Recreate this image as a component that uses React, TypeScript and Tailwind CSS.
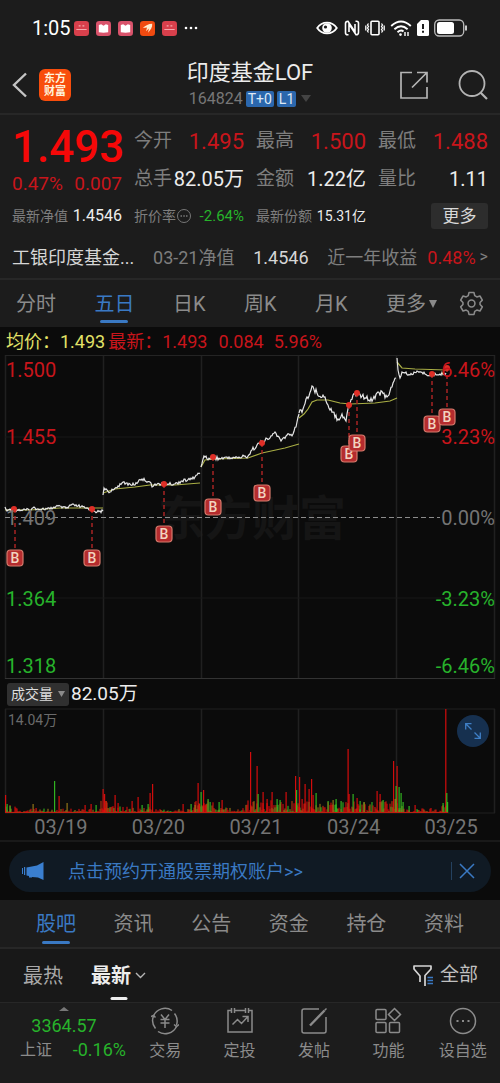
import React from "react";

type Pt = [number, number];

const priceDays: Pt[][] = [
  [[5, 507], [7, 511], [10, 509], [14, 510], [31, 510], [34, 507], [37, 509], [50, 509], [54, 507], [58, 506], [62, 508], [68, 508], [70, 505], [78, 506], [85, 508], [92, 509], [97, 512], [103, 511]],
  [[103, 495], [104, 488], [107, 490], [110, 492], [113, 490], [118, 486], [122, 483], [135, 485], [139, 480], [142, 479], [150, 482], [152, 487], [155, 484], [164, 484], [175, 484], [182, 481], [192, 479], [197, 475], [200, 473]],
  [[201, 467], [204, 456], [210, 459], [213, 457], [220, 459], [226, 457], [235, 458], [248, 456], [252, 450], [257, 445], [262, 442], [270, 438], [275, 432], [281, 441], [287, 435], [293, 434], [297, 422], [299, 414]],
  [[299, 413], [303, 409], [306, 399], [309, 396], [312, 386], [317, 393], [325, 397], [328, 405], [333, 412], [338, 419], [342, 414], [346, 421], [349, 405], [353, 395], [357, 393], [365, 398], [373, 399], [378, 392], [387, 397], [392, 387], [396, 378]],
  [[397, 358], [398, 370], [400, 378], [402, 372], [405, 373], [410, 375], [417, 371], [425, 374], [432, 375], [440, 374], [446, 373]],
];

const averageDays: Pt[][] = [
  [[5, 510], [30, 510], [60, 508], [103, 508]],
  [[103, 493], [115, 489], [135, 487], [150, 485], [175, 485], [200, 483]],
  [[201, 467], [205, 460], [215, 459], [248, 458], [262, 453], [285, 448], [299, 444]],
  [[299, 418], [304, 414], [308, 409], [312, 402], [317, 400], [328, 400], [340, 403], [350, 404], [375, 403], [390, 401], [397, 398]],
  [[397, 362], [402, 368], [415, 369], [446, 370]],
];

const buys: { dot: Pt; tag: Pt }[] = [
  { dot: [14, 509], tag: [15, 558] },
  { dot: [92, 509], tag: [92, 558] },
  { dot: [164, 484], tag: [164, 534] },
  { dot: [213, 457], tag: [213, 507] },
  { dot: [262, 443], tag: [262, 493] },
  { dot: [349, 405], tag: [349, 454] },
  { dot: [357, 393], tag: [357, 443] },
  { dot: [432, 374], tag: [432, 424] },
  { dot: [447, 368], tag: [447, 417] },
];

const noise = (n: number) => {
  const s = Math.sin(n * 12.9898) * 43758.5453;
  return s - Math.floor(s);
};

const jitterPath = (pts: Pt[], amp: number) => {
  let d = `M${pts[0][0]} ${pts[0][1]}`;
  for (let i = 1; i < pts.length; i++) {
    const [x0, y0] = pts[i - 1];
    const [x1, y1] = pts[i];
    const steps = Math.max(1, Math.round(x1 - x0));
    for (let k = 1; k <= steps; k++) {
      const t = k / steps;
      const x = x0 + (x1 - x0) * t;
      const wobble = k === steps ? 0 : (noise(x) - 0.5) * amp;
      d += `L${x.toFixed(1)} ${(y0 + (y1 - y0) * t + wobble).toFixed(1)}`;
    }
  }
  return d;
};

const linePath = (pts: Pt[]) => "M" + pts.map((p) => p.join(" ")).join("L");

const RED = "#e80c0c";
const GREEN = "#35c422";
const OLIVE = "#a08018";

const spikes: [number, number, string][] = [
  [5.5, 795, RED], [7, 804, GREEN], [10, 806, GREEN], [33, 804, OLIVE], [36, 808, RED], [54.5, 781, GREEN], [59, 796, RED], [67, 803, OLIVE],
  [85, 805, RED], [91, 804, RED], [96, 805, GREEN], [103, 789, RED], [104.5, 794, RED], [106, 801, RED], [115, 795, RED], [118, 803, RED],
  [132, 801, RED], [138, 797, RED], [142, 805, GREEN], [150, 793, RED], [152.5, 784, RED], [148, 804, GREEN], [183, 804, RED], [191, 804, GREEN],
  [195, 805, OLIVE], [198, 783, RED], [201, 792, GREEN], [203.5, 790, RED], [208, 799, GREEN], [210, 802, GREEN], [219, 802, GREEN], [222, 800, RED],
  [199.5, 804, RED], [206, 804, RED], [250.5, 752, RED], [257, 766, RED], [258, 794, GREEN], [263, 792, RED], [267, 799, RED], [272, 792, RED],
  [277, 799, GREEN], [280, 800, GREEN], [286, 792, RED], [295.5, 776, RED], [296.5, 790, GREEN], [299.5, 777, RED], [302, 799, RED], [305, 784, RED],
  [309, 789, RED], [311.5, 779, RED], [313, 795, RED], [316, 793, GREEN], [328, 801, GREEN], [333, 800, OLIVE], [336, 799, GREEN], [341, 801, GREEN],
  [348, 749, RED], [349, 794, RED], [353, 794, GREEN], [357, 798, RED], [360, 801, GREEN], [364, 802, OLIVE], [377, 791, RED], [380, 794, RED], [383, 800, GREEN],
  [393.5, 761, RED], [397, 766, RED], [396, 786, GREEN], [399, 787, GREEN], [401, 793, GREEN], [395, 799, OLIVE], [403, 802, GREEN],
  [409, 806, GREEN], [415, 805, RED], [445.7, 709, RED], [446.7, 793, GREEN], [443, 803, GREEN], [447.5, 802, GREEN],
];

const ambient = (x: number) => {
  if (x < 20) return 7;
  if (x < 100) return 3.5;
  if (x < 108) return 12;
  if (x < 156) return 6;
  if (x < 194) return 3;
  if (x < 214) return 12;
  if (x < 245) return 5;
  if (x < 318) return 12;
  if (x < 345) return 10;
  if (x < 392) return 11;
  if (x < 404) return 14;
  if (x < 440) return 4;
  return 7;
};

const ambientBars = Array.from({ length: 441 }, (_, i) => {
  const x = 6 + i;
  const c = noise(x * 3.7);
  return {
    x,
    h: 1 + ambient(x) * Math.pow(noise(x * 1.3), 1.6),
    color: c < 0.5 ? RED : c < 0.75 ? OLIVE : c < 0.87 ? GREEN : "#c83a10",
  };
});

const verticals = [5.5, 103.5, 201.5, 298.5, 396.5, 494.5];

function StatusBar() {
  return (
    <div className="flex h-14 items-center justify-between pl-8 pr-8 text-white">
      <div className="flex items-center gap-[7px]">
        <span className="mr-[-4px] text-[20px]">1:05</span>
        {["bank", "book", "book", "wing", "bank"].map((kind, i) => (
          <svg key={i} viewBox="0 0 16 16" className="size-[15px]" aria-hidden="true">
            <rect width="16" height="16" rx="3.5" fill={kind === "wing" ? "#f04a10" : kind === "book" ? "#d9536b" : "#d8404c"} />
            {kind === "bank" && <path d="M2.500 9h11M5 5.200h2M9 5.200h2" stroke="#f5a9ae" strokeWidth="1.100" />}
            {kind === "book" && <path d="M3 4.200 5.500 3.500 8 5l2.500-1.500 2.500.700V12l-5 .6-5-.6z" fill="#fff" />}
            {kind === "wing" && <path d="M3 7.500C6 4.500 9 3.200 13 3c.4 3.600-1.600 6.600-4.500 9.500L9.600 8 6.400 11 7.500 6.900z" fill="#ffeccf" />}
          </svg>
        ))}
        <svg viewBox="0 0 14 4" className="h-1 w-[14px]" fill="#fff" aria-hidden="true">
          <circle cx="2" cy="2" r="1.300" /><circle cx="7" cy="2" r="1.300" /><circle cx="12" cy="2" r="1.300" />
        </svg>
      </div>
      <div className="flex items-center gap-[5px]">
        <svg viewBox="0 0 22 16" className="h-4 w-[22px]" aria-hidden="true">
          <path d="M1.200 8C6 .800 16 .800 20.800 8 16 15.200 6 15.200 1.200 8z" fill="none" stroke="#fff" strokeWidth="1.800" />
          <circle cx="11" cy="8" r="4.800" fill="#fff" /><circle cx="9.500" cy="7" r="1.600" fill="#1c1c1c" />
        </svg>
        <svg viewBox="0 0 16 16" className="ml-px size-4" fill="none" stroke="#fff" aria-hidden="true">
          <path d="M4.500 14.800H3.500Q1.500 14.800 1.500 12.800V3.500Q1.500 1.200 4 1.200L11 12V4M11.500 1.200h1q2 0 2 2v9.300q0 2.300-2.500 2.300L5 4v8" strokeWidth="1.600" />
        </svg>
        <svg viewBox="0 0 20 16" className="h-4 w-5" fill="none" stroke="#fff" strokeWidth="1.600" aria-hidden="true">
          <rect x="6" y="1.200" width="8" height="13.600" rx="1" />
          <path d="M3.500 3.500 2.500 5l1 1.500L2.500 8l1 1.500-1 1.500 1 1.500M16.500 3.500l1 1.500-1 1.500 1 1.500-1 1.500 1 1.500-1 1.500M.800 5.500v5M19.200 5.500v5" strokeWidth="1.300" />
        </svg>
        <svg viewBox="0 0 22 17" className="h-[17px] w-[22px]" fill="none" stroke="#fff" strokeWidth="1.900" aria-hidden="true">
          <path d="M1.200 6Q11-3 20.800 6M4.400 9.200q6.600-5.800 13.200 0M7.500 12.200q3.500-3 6-.700" />
          <circle cx="10.500" cy="14.600" r="1.300" fill="#fff" stroke="none" />
          <path d="M15 12v4M18 12v4" strokeWidth="1.400" />
        </svg>
        <svg viewBox="0 0 12 16" className="h-4 w-3" aria-hidden="true">
          <path d="M4 0h6.500Q12 0 12 1.500v13q0 1.500-1.500 1.500h-9Q0 16 0 14.500V4z" fill="#fff" />
          <path d="M6 4v5M6 10.800v2" stroke="#1c1c1c" strokeWidth="2" />
        </svg>
        <svg viewBox="0 0 34 18" className="h-[18px] w-[34px]" aria-hidden="true">
          <rect x=".700" y="1" width="29" height="16" rx="4.500" fill="none" stroke="#bbb" strokeWidth="1.300" />
          <rect x="3" y="3" width="17" height="12" rx="2.500" fill="#fff" />
          <path d="M32 6.500v5" stroke="#ddd" strokeWidth="1.800" />
        </svg>
      </div>
    </div>
  );
}

function Header() {
  return (
    <header className="grid h-[59px] grid-cols-[1fr_auto_1fr] items-center border-b-2 border-[#272727] px-3">
      <div className="flex items-center gap-3">
        <button aria-label="返回" className="flex">
          <svg viewBox="0 0 15 26" className="h-[26px] w-[15px]" fill="none" stroke="#c4c4c4" strokeWidth="2.400"><path d="M14 1.500 2 13l12 11.500" /></svg>
        </button>
        <div className="flex size-8 flex-col items-center justify-center rounded-[6px] bg-[#f84d0c] text-[11px] font-bold leading-[13px] text-[#fff3dc]">
          <span>东方</span><span>财富</span>
        </div>
      </div>
      <div className="flex flex-col items-center">
        <h1 className="text-[22px] leading-7 text-[#ececec]">印度基金LOF</h1>
        <div className="flex items-center gap-[3px] leading-6">
          <span className="text-[16px] text-[#777]">164824</span>
          <span className="rounded-[2px] bg-[#2b67ad] px-[2px] text-[14px] leading-4 text-[#dfe9f5]">T+0</span>
          <span className="rounded-[2px] bg-[#2b67ad] px-[2px] text-[14px] leading-4 text-[#dfe9f5]">L1</span>
          <button aria-label="选择市场" className="ml-[2px]">
            <svg viewBox="0 0 10 7" className="h-[7px] w-[10px]" fill="#444"><path d="M0 0h10L5 7z" /></svg>
          </button>
        </div>
      </div>
      <div className="flex items-center justify-end gap-[29px]">
        <button aria-label="分享" className="mr-px">
          <svg viewBox="0 0 28 28" className="size-7" fill="none" stroke="#b4b4b4" strokeWidth="1.700"><path d="M12 1.500H1v25.500h26V16M17 1.500h10v10M27 1.500 12 16.500" /></svg>
        </button>
        <button aria-label="搜索">
          <svg viewBox="0 0 30 30" className="size-[30px]" fill="none" stroke="#b4b4b4" strokeWidth="1.800"><circle cx="14" cy="13.500" r="12.500" /><path d="m22.500 22.500 6.500 6.500" strokeWidth="2.200" /></svg>
        </button>
      </div>
    </header>
  );
}

function Stat({ label, value, red = false }: { label: string; value: string; red?: boolean }) {
  return (
    <div className="flex h-[38px] items-center justify-between whitespace-nowrap">
      <span className="text-[19px] text-[#7e7e7e]">{label}</span>
      <span className={red ? "text-[22px] text-[#c8151b]" : "text-[20px] text-[#ededed]"}>{value}</span>
    </div>
  );
}

function Quote() {
  return (
    <section className="px-3 pt-[7px]">
      <div className="grid grid-cols-4 gap-x-3">
        <div className="flex flex-col">
          <strong className="text-[44px] font-medium leading-[50px] text-[#f60808]">1.493</strong>
          <div className="flex justify-between text-[19px] leading-6 text-[#c8151b]"><span>0.47%</span><span>0.007</span></div>
        </div>
        <div><Stat label="今开" value="1.495" red /><Stat label="总手" value="82.05万" /></div>
        <div><Stat label="最高" value="1.500" red /><Stat label="金额" value="1.22亿" /></div>
        <div><Stat label="最低" value="1.488" red /><Stat label="量比" value="1.11" /></div>
      </div>
      <div className="grid h-9 grid-cols-4 items-center gap-x-3 whitespace-nowrap text-[14px]">
        <div className="flex items-center justify-between"><span className="text-[#7e7e7e]">最新净值</span><span className="text-[16px] text-[#ededed]">1.4546</span></div>
        <div className="flex items-center justify-between">
          <span className="flex items-center text-[#7e7e7e]">折价率
            <svg viewBox="0 0 16 16" className="size-4" fill="none" stroke="#777" aria-hidden="true"><circle cx="8" cy="8" r="6.500" /><path d="M4.500 8h1.500M7.300 8h1.500M10 8h1.500" strokeWidth="1.500" /></svg>
          </span>
          <span className="text-[15px] text-[#27b32b]">-2.64%</span>
        </div>
        <div className="flex items-center justify-between"><span className="text-[#7e7e7e]">最新份额</span><span className="text-[#ededed]">15.31亿</span></div>
        <button className="h-[26px] w-[57px] justify-self-end rounded-[3px] bg-[#2d2d2d] text-[17px] leading-[26px] text-[#d8d8d8]">更多</button>
      </div>
      <a href="#fund" className="mt-[2px] flex h-[42px] items-center justify-between whitespace-nowrap text-[18px] text-[#7e7e7e]">
        <span className="text-[#d6d6d6]">工银印度基金...</span>
        <span>03-21净值</span>
        <span className="text-[#d6d6d6]">1.4546</span>
        <span className="flex items-center gap-[10px]">
          近一年收益
          <span className="flex items-center gap-1"><span className="text-[#c8151b]">0.48%</span><span className="text-[16px]">&gt;</span></span>
        </span>
      </a>
    </section>
  );
}

function PeriodTabs() {
  return (
    <nav className="flex h-[49px] items-stretch gap-[22px] border-t-2 border-[#272727] px-4 text-[20px] text-[#8b8b8b]">
      <div className="flex flex-1 items-stretch justify-between">
        {["分时", "五日", "日K", "周K", "月K"].map((t) => (
          <button key={t} className={t === "五日" ? "relative text-[#3a79c3]" : "relative"}>
            {t}
            {t === "五日" && <span className="absolute bottom-1 left-1/2 h-[3px] w-7 -translate-x-1/2 rounded-full bg-[#3a79c3]" />}
          </button>
        ))}
        <button className="flex items-center gap-[3px]">更多
          <svg viewBox="0 0 8 8" className="size-[8px]" fill="#8b8b8b" aria-hidden="true"><path d="M0 0h8L4 8z" /></svg>
        </button>
      </div>
      <button aria-label="设置">
        <svg viewBox="0 0 24 24" className="size-[25px]" fill="none" stroke="#8b8b8b" strokeWidth="1.500" strokeLinejoin="round">
          <path d="M9.600 1.500h4.800l.7 3 2 1.200 3-.900 2.300 4-2.200 2.200v2l2.200 2.200-2.300 4-3-.900-2 1.200-.7 3H9.600l-.7-3-2-1.200-3 .9-2.300-4L3.800 13v-2L1.600 8.800l2.300-4 3 .9 2-1.200z" /><circle cx="12" cy="12" r="3.300" />
        </svg>
      </button>
    </nav>
  );
}

function PriceChart() {
  return (
    <section className="bg-[#0b0b0b]">
      <div className="flex h-7 items-center whitespace-nowrap pl-[6px] text-[18px] text-[#c8151b]">
        <span className="text-[#e2e268]">均价：1.493</span>
        <span className="ml-[3px]">最新：1.493</span>
        <span className="ml-[11px]">0.084</span>
        <span className="ml-[10px]">5.96%</span>
      </div>
      <div className="relative">
        <svg viewBox="0 355 500 325" className="block h-auto w-full" role="img" aria-label="五日价格走势">
          <text x="252" y="535" textAnchor="middle" fontSize="47" fontWeight="700" fill="#151515">东方财富</text>
          {verticals.map((x) => <path key={x} d={`M${x} 355V679`} stroke="#202020" strokeWidth="1.500" />)}
          <path d="M5 355.500H495" stroke="#242424" />
          <path d="M5 437H495M5 598H495" stroke="#181818" />
          <path d="M5 678.500H495" stroke="#333" />
          <path d="M5 517.500H440" stroke="#8c8c8c" strokeDasharray="5 3" />
          {averageDays.map((d, i) => <path key={i} d={linePath(d)} fill="none" stroke="#a9ae45" strokeWidth="1.200" />)}
          {priceDays.map((d, i) => <path key={i} d={jitterPath(d, i === 3 ? 6 : i === 2 ? 4 : 3)} fill="none" stroke="#e6e6e6" strokeWidth="1.200" />)}
          {buys.map(({ dot, tag }) => (
            <g key={tag[0]}>
              <path d={`M${tag[0]} ${dot[1]}V${tag[1] - 8}`} stroke="#a82525" strokeWidth="1.500" strokeDasharray="4 3" />
              <circle cx={dot[0]} cy={dot[1]} r="3" fill="#df2f27" />
            </g>
          ))}
          {buys.map(({ tag }) => (
            <g key={tag[0]}>
              <rect x={tag[0] - 8} y={tag[1] - 8} width="16" height="16" rx="3.500" fill="#b52c2e" stroke="#d67a6c" strokeWidth="1.200" />
              <text x={tag[0]} y={tag[1] + 5} textAnchor="middle" fontSize="14" fontWeight="500" fill="#f2d3bf">B</text>
            </g>
          ))}
        </svg>
        <div className="absolute inset-0 flex justify-between pb-[2px] pl-[6px] pr-[5px] pt-[3px] text-[20px] leading-6">
          {[["1.500", "1.455", "1.409", "1.364", "1.318"], ["6.46%", "3.23%", "0.00%", "-3.23%", "-6.46%"]].map((col, c) => (
            <div key={c} className={c ? "grid grid-rows-[67fr_81fr_81fr_67fr_24px] text-right" : "grid grid-rows-[67fr_81fr_81fr_67fr_24px]"}>
              {col.map((v, r) => (
                <span key={v} className={r < 2 ? "text-[#c8151b]" : r === 2 ? "text-[#747474]" : "text-[#27b32b]"}>{v}</span>
              ))}
            </div>
          ))}
        </div>
      </div>
    </section>
  );
}

function VolumeChart() {
  return (
    <section className="bg-[#0b0b0b]">
      <div className="flex h-7 items-center gap-[2px] pl-[7px]">
        <div className="relative flex items-center">
          <select aria-label="指标" defaultValue="vol" className="h-[23px] w-[62px] appearance-none rounded-[3px] bg-[#303030] pl-1 text-[14px] leading-[23px] text-[#dedede]">
            <option value="vol">成交量</option>
            <option value="macd">MACD</option>
          </select>
          <svg viewBox="0 0 7 6" className="pointer-events-none absolute right-1 h-[6px] w-[7px]" fill="#8b8b8b" aria-hidden="true"><path d="M0 0h7L3.500 6z" /></svg>
        </div>
        <span className="text-[19px] leading-6 text-[#ededed]">82.05万</span>
      </div>
      <div className="relative">
        <svg viewBox="0 708 500 106" className="block h-auto w-full" role="img" aria-label="成交量">
          {verticals.map((x) => <path key={x} d={`M${x} 709V813`} stroke="#202020" strokeWidth="1.500" />)}
          <path d="M5 709H495M5 813H495" stroke="#202020" />
          {ambientBars.map((b) => <rect key={b.x} x={b.x - 0.5} y={813 - b.h} width="1" height={b.h} fill={b.color} />)}
          {spikes.map(([x, y, c], i) => <rect key={i} x={x - 0.5} y={y} width="1.200" height={813 - y} fill={c} opacity=".9" />)}
          <path d="M5 812.500H448" stroke="#c02010" />
        </svg>
        <span className="absolute left-2 top-[2px] text-[14px] leading-5 text-[#6a6a6a]">14.04万</span>
        <button aria-label="全屏" className="absolute right-[11px] top-[7px] flex size-8 items-center justify-center rounded-full bg-[#16304f]">
          <svg viewBox="0 0 16 16" className="size-4" fill="none" stroke="#3f7fc6" strokeWidth="1.300"><path d="M6.500.700H.700v5.800M1 1l5.500 5.500M9.500 15.300h5.800V9.500M15 15 9.500 9.500" /></svg>
        </button>
      </div>
      <div className="grid h-7 grid-cols-5 border-b-2 border-[#191919] pl-3 text-center text-[20px] leading-[26px] text-[#747474]">
        {["03/19", "03/20", "03/21", "03/24", "03/25"].map((d) => <span key={d}>{d}</span>)}
      </div>
    </section>
  );
}

function Banner() {
  return (
    <div className="bg-[#0b0b0b] px-[9px] py-2">
      <div className="flex h-[42px] items-center rounded-full bg-[#101a24] pl-[13px] pr-4 text-[#3a79c3]">
        <svg viewBox="0 0 22 18" className="h-[18px] w-[22px]" fill="#3a7fd0" aria-hidden="true"><path d="M21.500 0v18l-5.500-2.500L10 15v.5H7V14l-2.500-.5v-8L15 3.500zM0 6h1v6H0zM2 5h1.200v8H2z" /></svg>
        <a href="#options" className="ml-6 text-[18px]">点击预约开通股票期权账户&gt;&gt;</a>
        <span className="ml-auto h-[18px] w-px bg-[#24415f]" />
        <button aria-label="关闭" className="ml-[7px]">
          <svg viewBox="0 0 16 16" className="size-4" fill="none" stroke="#3a79c3" strokeWidth="1.500"><path d="m1 1 14 14M15 1 1 15" /></svg>
        </button>
      </div>
    </div>
  );
}

function Community() {
  return (
    <section>
      <nav className="flex h-[49px] justify-between border-b-2 border-[#272727] px-9 text-[20px] text-[#8b8b8b]">
        {["股吧", "资讯", "公告", "资金", "持仓", "资料"].map((t) => (
          <button key={t} className={t === "股吧" ? "relative text-[#3a79c3]" : "relative"}>
            {t}
            {t === "股吧" && <span className="absolute bottom-[3px] left-1/2 h-[3px] w-7 -translate-x-1/2 rounded-full bg-[#3a79c3]" />}
          </button>
        ))}
      </nav>
      <div className="flex h-[54px] items-center border-b border-[#272727] bg-[#181818] pl-[23px] pr-[22px] text-[20px] text-[#a8a8a8]">
        <button>最热</button>
        <button className="relative ml-7 flex h-full items-center gap-1 font-bold text-[#ededed]">最新
          <svg viewBox="0 0 11 7" className="h-[7px] w-[11px]" fill="none" stroke="#b5b5b5" strokeWidth="1.400" aria-hidden="true"><path d="m1 1 4.500 4.500L10 1" /></svg>
          <span className="absolute bottom-[2px] left-1/2 h-[3px] w-[17px] -translate-x-1/2 rounded-full bg-[#ededed]" />
        </button>
        <button className="ml-auto flex items-center gap-[7px] text-[19px] text-[#c0c0c0]">
          <svg viewBox="0 0 20 22" className="h-[22px] w-5" fill="none" stroke="#d5d5d5" strokeWidth="1.700" strokeLinejoin="round" aria-hidden="true"><path d="M7 17v-6L1 4V1h17v3l-6 6.500V21" /><path d="M14.500 12.500H20M14.500 15.500H20M14.500 18.500H20" stroke="#3a79c3" strokeWidth="1.300" /></svg>
          全部
        </button>
      </div>
    </section>
  );
}

const actions: { label: string; icon: React.ReactNode }[] = [
  { label: "交易", icon: <><path d="M2.500 9A12.500 12.500 0 0 1 21 3.500M23.500 6.500a12.500 12.500 0 0 1 2 11.500M25.500 19.500A12.500 12.500 0 0 1 7 24.500M4.500 21.500A12.500 12.500 0 0 1 2.500 9" /><path d="M0 9.500 2.500 8.500l2 2M23 17.500l2.500 2 2.500-2M10 7.500l4 5 4-5M9.500 12.500h9M9.500 16h9M14 12.500V21" /></> },
  { label: "定投", icon: <><path d="M5 3.500H2V25h24V3.500h-3M8.500 3.500h11M5.500 1v5M8.500 1v5M19.500 1v5M22.500 1v5" /><path d="m6.500 17.500 5-5 4 4 6-6.500M16.500 9.500H22V15" /></> },
  { label: "发帖", icon: <><path d="M19 2H4Q2 2 2 4v20q0 2 2 2h20q2 0 2-2V10" /><path d="M10 18.500 24.500 3.500" strokeWidth="2.400" /><path d="m24.500 3.500 2-2" /></> },
  { label: "功能", icon: <><rect x="2" y="2.500" width="10" height="10" rx="1" /><rect x="2" y="15.500" width="10" height="10" rx="1" /><rect x="15.500" y="15.500" width="10" height="10" rx="1" /><path d="m20.500 1.500 6 6-6 6-6-6z" /></> },
  { label: "设自选", icon: <><circle cx="14" cy="14" r="12.500" /><path d="M7.500 14h2M13 14h2M18.500 14h2" strokeWidth="2" /></> },
];

function BottomNav() {
  return (
    <footer className="grid h-[81px] grid-cols-[128px_repeat(5,minmax(0,1fr))] bg-[#1c1c1c]">
      <a href="#index" className="flex flex-col items-center pt-1">
        <svg viewBox="0 0 10 4" className="h-1 w-[10px]" fill="#777" aria-hidden="true"><path d="M0 4 5 0l5 4z" /></svg>
        <span className="mt-[3px] text-[18px] leading-6 text-[#27b32b]">3364.57</span>
        <span className="flex w-full items-center justify-between pl-5 pr-[2px] text-[16px] leading-6 text-[#8b8b8b]">上证<span className="text-[18px] text-[#27b32b]">-0.16%</span></span>
      </a>
      {actions.map((a) => (
        <button key={a.label} className="flex flex-col items-center gap-1 pt-1 text-[16px] leading-6 text-[#8b8b8b]">
          <svg viewBox="0 0 28 28" className="size-7" fill="none" stroke="#8b8b8b" strokeWidth="1.500" aria-hidden="true">{a.icon}</svg>
          {a.label}
        </button>
      ))}
    </footer>
  );
}

export default function App() {
  return (
    <main className="min-h-screen w-full bg-[#1c1c1c] font-['Roboto','Noto_Sans_CJK_SC',sans-serif] leading-normal">
      <StatusBar />
      <Header />
      <Quote />
      <PeriodTabs />
      <PriceChart />
      <VolumeChart />
      <Banner />
      <Community />
      <BottomNav />
    </main>
  );
}
